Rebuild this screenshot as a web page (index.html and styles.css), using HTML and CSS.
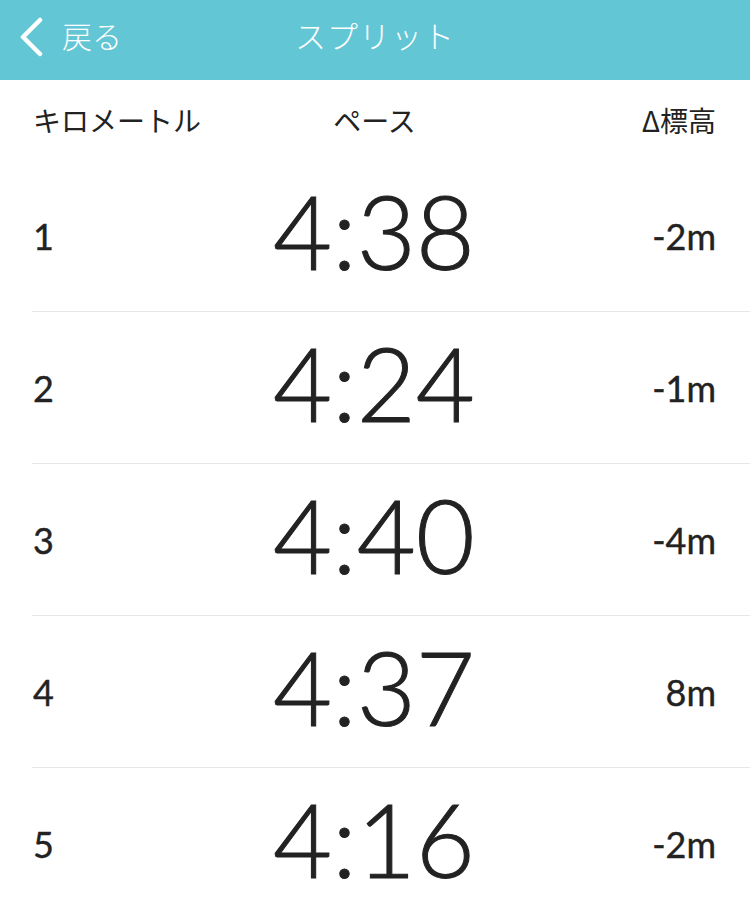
FILE: index.html
```html
<!DOCTYPE html>
<html lang="ja">
<head>
    <meta charset="UTF-8">
    <meta name="viewport" content="width=device-width, initial-scale=1.0">
    <title>スプリット</title>
    <link rel="stylesheet" href="styles.css">
</head>
<body>
    <header class="nav-bar">
        <a class="back" href="#">
            <svg class="back-icon" width="26" height="40" viewBox="0 0 26 40">
                <path d="M22 3 L5 20 L22 37" fill="none" stroke="#fff" stroke-width="4.5" stroke-linecap="round" stroke-linejoin="round"/>
            </svg>
            <span>戻る</span>
        </a>
        <h1 class="nav-title">スプリット</h1>
    </header>
    <main>
        <div class="split-head">
            <span class="col-km">キロメートル</span>
            <span class="col-pace">ペース</span>
            <span class="col-elev">Δ標高</span>
        </div>
        <ul class="split-list">
            <li class="split-row"><span class="km">1</span><span class="pace">4:38</span><span class="elev">-2m</span></li>
            <li class="split-row"><span class="km">2</span><span class="pace">4:24</span><span class="elev">-1m</span></li>
            <li class="split-row"><span class="km">3</span><span class="pace">4:40</span><span class="elev">-4m</span></li>
            <li class="split-row"><span class="km">4</span><span class="pace">4:37</span><span class="elev">8m</span></li>
            <li class="split-row"><span class="km">5</span><span class="pace">4:16</span><span class="elev">-2m</span></li>
        </ul>
    </main>
</body>
</html>
```

FILE: styles.css
```css
body {
  margin: 0;
  background: #fff;
  color: #222;
  font-family: "Lato", "Noto Sans CJK JP", sans-serif;
  overflow: hidden;
}
.nav-bar {
  position: relative;
  display: flex;
  align-items: center;
  justify-content: center;
  height: 80px;
  background: #63c6d5;
  color: #fff;
}
.back {
  position: absolute;
  left: 18px;
  top: 17px;
  display: flex;
  align-items: center;
  gap: 18px;
  color: #fff;
  text-decoration: none;
  font-family: "Noto Sans CJK JP", sans-serif;
  font-size: 30px;
  font-weight: 300;
}
.back span {
  margin-top: -5px;
}
.back-icon {
  display: block;
}
.nav-title {
  margin: 0 0 12px;
  font-family: "Noto Sans CJK JP", sans-serif;
  font-size: 31px;
  font-weight: 300;
  letter-spacing: 1px;
}
.split-head {
  display: grid;
  grid-template-columns: 1fr 1fr 1fr;
  align-items: center;
  height: 80px;
  padding: 0 34px 0 33px;
  font-family: "Noto Sans CJK JP", sans-serif;
  font-size: 28px;
  font-weight: 400;
  box-sizing: border-box;
}
.col-pace {
  text-align: center;
}
.col-elev {
  text-align: right;
}
.split-list {
  margin: 0;
  padding: 0 0 0 32px;
  list-style: none;
}
.split-row {
  display: grid;
  grid-template-columns: 1fr auto 1fr;
  align-items: center;
  height: 151px;
  padding-right: 34px;
  border-bottom: 1px solid #e6e6e6;
}
.km {
  font-size: 36px;
  padding-left: 1px;
  -webkit-text-stroke: 0.4px #222;
}
.pace {
  font-size: 102px;
  font-weight: 300;
  line-height: 1;
  margin-bottom: 10px;
  -webkit-text-stroke: 1px #222;
}
.elev {
  text-align: right;
  font-size: 36px;
  -webkit-text-stroke: 0.4px #222;
}
```
